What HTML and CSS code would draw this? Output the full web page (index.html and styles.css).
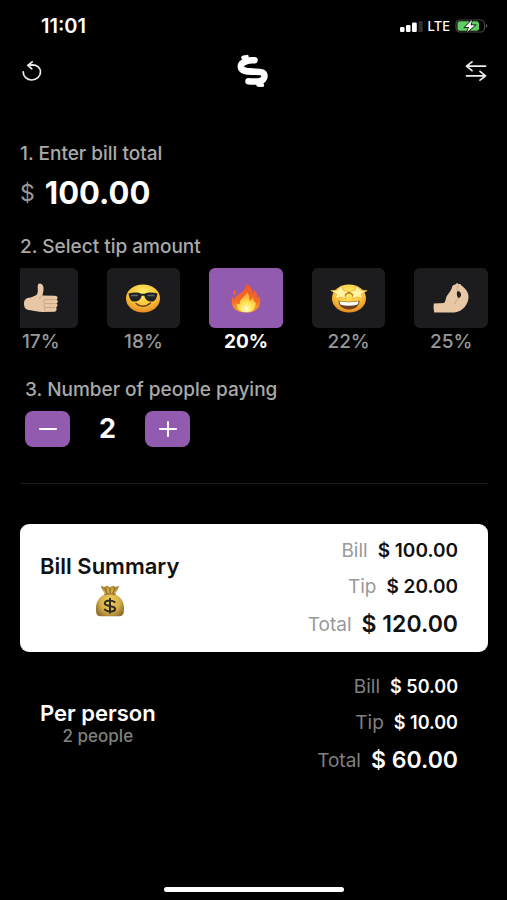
FILE: index.html
```html
<!DOCTYPE html>
<html lang="en">
<head>
<meta charset="utf-8">
<meta name="viewport" content="width=device-width, initial-scale=1">
<title>Tip calculator</title>
<link rel="stylesheet" href="styles.css">
</head>
<body>
<div class="app">
  <div class="status">
    <span class="time">11:01</span>
    <div class="signals">
      <svg width="23" height="11" viewBox="0 0 23 11" aria-hidden="true">
        <g fill="#fff"><rect x="0" y="6" width="4.5" height="5" rx="1.3"/><rect x="6" y="4" width="4.5" height="7" rx="1.3"/><rect x="12" y="1.5" width="4.8" height="9.5" rx="1.3"/></g>
        <rect x="18.5" y="0" width="4.3" height="11" rx="1.2" fill="#303032"/>
      </svg>
      <span>LTE</span>
      <svg width="33" height="14" viewBox="0 0 33 14" aria-hidden="true">
        <rect x="1" y="1" width="28.5" height="12" rx="4" fill="none" stroke="#48484a" stroke-width="1.2"/>
        <path d="M31 4.800q2.600 2.200 0 4.400z" fill="#5a5a5c"/>
        <rect x="2.500" y="2.300" width="21.500" height="9.400" rx="2.500" fill="#5fcb61"/>
        <path d="M17.200.800 10 8h4L12 13.200 20 6.200h-4.400z" fill="#fff" stroke="#000" stroke-width="1.400" paint-order="stroke"/>
      </svg>
    </div>
  </div>

  <header class="bar">
    <button class="icon" type="button" aria-label="Reset">
      <svg width="20" height="22" viewBox="0 0 20 22" fill="none" stroke="#eee" stroke-width="1.7" stroke-linecap="round" stroke-linejoin="round">
        <path d="M1.200 11.800C1 16.500 5 20 9.800 20s8.700-3.400 8.700-7.900c0-4.200-3.400-7.200-8-7.200L5.800 5.300M10.200 1.800 5.800 5.300l4 3.500"/>
      </svg>
    </button>
    <svg class="logo" width="34" height="34" viewBox="0 0 34 34" fill="none" stroke="#fff" stroke-linecap="round" stroke-linejoin="round" aria-hidden="true">
      <path stroke-width="6.500" d="M17.500 6.300C12.500 5.800 3.800 7.500 3.800 12.500c0 5 6.700 5 12 5.200 6 .2 11.700-.6 11.700 4.300 0 3.500-3 5-6.500 5.500-4 .2-8-.2-9.500-.2"/>
      <path stroke-width="5" d="M7.500 4 8.500 7M23.500 30 25 27"/>
      <path stroke-width="3.500" d="M6 3.500 10 2.600M21 31l4.500.2"/>
      <path stroke-width="3" d="M8 15 19 17M13 15.500 25 17.500"/>
    </svg>
    <button class="icon" type="button" aria-label="Swap">
      <svg width="22" height="22" viewBox="0 0 22 22" fill="none" stroke="#eee" stroke-width="1.7" stroke-linecap="round" stroke-linejoin="round">
        <path d="M20.500 6.200H1.500M7 1.800 1.500 6.200 7 10.600M1.500 15.800H20.500M15 11.400l5.500 4.400L15 20.200"/>
      </svg>
    </button>
  </header>

  <main>
    <section class="bill">
      <label class="step" for="bill">1. Enter bill total</label>
      <div class="amount"><span class="currency">$</span><input id="bill" type="text" inputmode="decimal" value="100.00"></div>
    </section>

    <section class="tip">
      <h2 class="step">2. Select tip amount</h2>
      <div class="scroller">
        <div class="tips">
          <button class="option" type="button">
            <span class="tile"><svg width="36" height="32" viewBox="0 0 36 32" aria-hidden="true">
              <path d="M1 21C1.200 16.500 5 15.500 8.500 15.200L13.500 13C16 10 14 5 15 2.500c1-1.800 5-1.300 5.500 3 .3 3-.6 5.700-1.100 8.100l12.500.1c3 .1 3.600 3 1.300 3.900 2.300.7 2.100 3.300.1 4 1.800.8 1.500 3.100-.2 3.800 1 1 .7 4.300-2 4.400l-11.500.2C15 30 11 28.500 7.500 28.200 3 28 .8 26 1 21z" fill="#e7c7a5"/>
              <path d="M19 14c-2 .8-2.500 1.300-2.700 3M32.500 17.600H22c-2 0-2 3.800.3 4h10.200M32 25.500H22.500c-2-.2-2-3.300-.1-3.800M22.500 25.500c-1.500.3-1.600 2.500-.2 3.800" fill="none" stroke="#c39d79" stroke-width=".8"/>
            </svg></span>
            <span class="rate">17%</span>
          </button>
          <button class="option" type="button">
            <span class="tile"><svg width="36" height="32" viewBox="0 0 36 32" aria-hidden="true">
              <defs><radialGradient id="face" cx=".5" cy=".3" r=".7"><stop offset="0" stop-color="#fff06a"/><stop offset=".6" stop-color="#fbc43b"/><stop offset="1" stop-color="#e58a22"/></radialGradient></defs>
              <ellipse cx="18" cy="16.500" rx="17" ry="14" fill="url(#face)"/>
              <path d="M3.500 11.500c5-1.700 10-1.300 13 .2h3c3-1.500 8-1.900 13-.2l-.5 2.200C31 19 28 20 25 19.500c-3.500-.6-5-3-5.700-5.800h-2.600C16 16.500 14.500 18.900 11 19.500 8 20 5 19 4 13.700z" fill="#202225"/>
              <path d="M6 13.500h7M22.500 13.500h7" stroke="#62676b" stroke-width="1.300"/>
              <path d="M11 21.500c3.500 3.600 10 3.700 14.500-.5" fill="none" stroke="#75421d" stroke-width="1.600" stroke-linecap="round"/>
            </svg></span>
            <span class="rate">18%</span>
          </button>
          <button class="option selected" type="button" aria-pressed="true">
            <span class="tile"><svg width="32" height="32" viewBox="0 0 32 32" aria-hidden="true">
              <defs><linearGradient id="flame" x1="0" y1="0" x2="0" y2="1"><stop offset="0" stop-color="#f5542b"/><stop offset=".6" stop-color="#f36b26"/><stop offset="1" stop-color="#f9a82b"/></linearGradient>
              <radialGradient id="core" cx=".5" cy=".85" r=".8"><stop offset="0" stop-color="#fffbd0"/><stop offset=".45" stop-color="#ffe14d"/><stop offset="1" stop-color="#fb9a2b"/></radialGradient></defs>
              <path d="M15.500 1.500C21 4 23 8 22.500 11.500c1.500-.8 1.600-2.400 1.500-3.800C27 10.500 27.500 14 27.500 16c1-.5 1.500-1.500 1.700-2.500C32 20 30.500 30.500 16 30.500S.500 21 2.500 14c.5 1.500 1 2.600 2.200 3.300C4.500 14.500 7.500 13.500 10 11.500 13 9 16.500 6.500 15.500 1.500z" fill="url(#flame)"/>
              <path d="M17 10c2.500 3 2.800 6 2.500 9 1.800-.8 2.600-2 2.700-4 2 2.500 1 5 3.800 5.500C26 26 23 30.300 16 30.300c-6.500 0-9.500-3.800-9.500-8.800 1.500 1 2.500 1 3.500.3C8.800 17 15 16 17 10z" fill="url(#core)"/>
              <path d="M4.500 8c2.200 1.500 1.800 4 .2 5C2.500 11.700 3.300 9.500 4.500 8z" fill="#f2662b"/>
            </svg></span>
            <span class="rate">20%</span>
          </button>
          <button class="option" type="button">
            <span class="tile"><svg width="38" height="32" viewBox="0 0 38 32" aria-hidden="true">
              <ellipse cx="19" cy="16.500" rx="17" ry="14" fill="url(#face)"/>
              <path d="M8.500 18.500c6 1.700 15 1.700 21 0 .5 5-4.500 9-10.500 9s-11-4-10.500-9z" fill="#70401f"/>
              <path d="M9.500 19.200c6 1.500 13 1.500 19 0 .1 1.500-.5 2.600-1.300 3.600-5 1.200-11.400 1.200-16.400 0-.8-1-1.400-2.100-1.300-3.600z" fill="#fff"/>
              <path d="M15 14.500c1-5 7-5 8 0" fill="none" stroke="#9b671d" stroke-width="1.300"/>
              <path d="M11.500 4l1.900 4.500 5.300.9-3.900 3 1.100 4.600-5-2-5.500 1.600 1.400-4.400L.8 8.500l6.400-.3z" fill="#fff3a5" stroke="#eda72d" stroke-width=".7" stroke-linejoin="round"/>
              <path d="M26.500 4l-1.900 4.500-5.300.9 3.900 3-1.100 4.600 5-2 5.500 1.600-1.400-4.400 6-3.700-6.400-.3z" fill="#fff3a5" stroke="#eda72d" stroke-width=".7" stroke-linejoin="round"/>
            </svg></span>
            <span class="rate">22%</span>
          </button>
          <button class="option" type="button">
            <span class="tile"><svg width="36" height="32" viewBox="0 0 36 32" aria-hidden="true">
              <path d="M.8 21.500 11 21c2-1.500 1.500-5.500 3.500-8C17 9.800 18.500 8 19.300 4.500c.4-1.500 1.700-2.200 2.800-1.700C22.800.8 25 .8 25.600 2.200c1.500-.4 2.400.4 2.800 1.400C33 7 36 11 35.500 16c-.5 6-5.500 13.500-14 14.500H1.300C.5 28 .5 24 .8 21.500z" fill="#e7c7a5"/>
              <path d="M24.200 9.500c2-1.500 3.800 1.500 3.900 3.500-.3 2-1.500 2.600-2.500 3.200-1.600-1.200-2.300-4.500-1.400-6.700z" fill="#242022"/>
              <path d="M25.500 3.500c-2 2-1.500 5-1 6M26 16c-2.500 1.500-3.500 4-4.500 6.500" fill="none" stroke="#c39d79" stroke-width=".8"/>
            </svg></span>
            <span class="rate">25%</span>
          </button>
        </div>
      </div>
    </section>

    <section class="people">
      <h2 class="step">3. Number of people paying</h2>
      <div class="stepper">
        <button type="button" aria-label="Fewer people"><svg width="18" height="18" viewBox="0 0 18 18"><path d="M1 9H17" stroke="#fff" stroke-width="2" stroke-linecap="round"/></svg></button>
        <output>2</output>
        <button type="button" aria-label="More people"><svg width="18" height="18" viewBox="0 0 18 18"><path d="M1 9H17M9 2V16" stroke="#fff" stroke-width="2" stroke-linecap="round"/></svg></button>
      </div>
    </section>

    <hr>

    <section class="card light">
      <div class="caption">
        <h3>Bill Summary</h3>
        <svg width="30" height="32" viewBox="0 0 30 32" aria-hidden="true">
          <defs><radialGradient id="bag" cx=".5" cy=".5" r=".6"><stop offset="0" stop-color="#f0d25c"/><stop offset=".6" stop-color="#d3ad48"/><stop offset="1" stop-color="#8f6a2b"/></radialGradient></defs>
          <path d="M6 .8 9 2 12 .8 15 2 18.500.8 21 2 24 .8C23.500 4.500 21 6.500 20.300 9.500 26 12 29 17 29 23c0 6-1 8-4.500 8.300h-19C2 31 .8 29 1 23 1 17 4 12 9.800 9.500 9 6.500 6.300 4.500 6 .8z" fill="url(#bag)"/>
          <path d="M9.500 9.500Q15 8 20.500 9.500M10 3l2 5.500M15 3v5M20 3l-2 5.500" fill="none" stroke="#8a642c" stroke-width="1.200"/>
          <path d="M20 17.800c-1-2.500-9.600-3.500-10.200.6-.5 3.300 10.600 1.900 10.400 5.500-.2 3.700-9.300 3.300-10.700 0M15 13v15.500" fill="none" stroke="#302a24" stroke-width="2"/>
        </svg>
      </div>
      <dl>
        <div><dt>Bill</dt><dd>$ 100.00</dd></div>
        <div><dt>Tip</dt><dd>$ 20.00</dd></div>
        <div class="total"><dt>Total</dt><dd>$ 120.00</dd></div>
      </dl>
    </section>

    <section class="card">
      <div class="caption">
        <h3>Per person</h3>
        <p>2 people</p>
      </div>
      <dl>
        <div><dt>Bill</dt><dd>$ 50.00</dd></div>
        <div><dt>Tip</dt><dd>$ 10.00</dd></div>
        <div class="total"><dt>Total</dt><dd>$ 60.00</dd></div>
      </dl>
    </section>
  </main>

  <div class="home"></div>
</div>
</body>
</html>
```
FILE: styles.css
```css
* { box-sizing: border-box; margin: 0; padding: 0; }
body { background: #000; color: #fff; font-family: Inter, "Liberation Sans", sans-serif; }
button { background: none; border: 0; color: inherit; font: inherit; cursor: pointer; }
svg { display: block; flex: none; }
.app { min-height: 100vh; display: flex; flex-direction: column; padding: 16px 19px 8px 20px; }

.status { display: flex; justify-content: space-between; align-items: center; height: 20px; padding-left: 21px; }
.time { font-size: 20px; font-weight: 600; }
.signals { display: flex; align-items: center; gap: 5px; font-size: 13px; font-weight: 500; }

.bar { display: flex; justify-content: space-between; align-items: center; height: 36px; margin-top: 17px; }
.icon { width: 24px; height: 24px; display: flex; align-items: center; justify-content: center; }

.step { display: block; font-size: 19px; font-weight: 500; line-height: 24px; color: #aaa; }
.bill { margin-top: 53px; }
.amount { display: flex; align-items: center; gap: 10px; height: 36px; margin-top: 9px; }
.currency { font-size: 23px; font-weight: 400; color: #999; }
.amount input { flex: 1; min-width: 0; background: none; border: 0; outline: 0; color: #fff; font: 700 31px/36px Inter, sans-serif; }

.tip { margin-top: 24px; }
.scroller { overflow: hidden; margin-top: 9px; }
.tips { display: grid; grid-template-columns: repeat(5, 1fr); gap: 29px; margin-left: -16px; }
.option { display: block; text-align: center; }
.tile { display: flex; align-items: center; justify-content: center; height: 60px; border-radius: 6px; background: #1c1c1e; }
.rate { display: block; margin-top: 3px; font-size: 19px; font-weight: 500; line-height: 22px; color: #999; }
.selected .tile { background: #935bb0; }
.selected .rate { color: #fff; font-weight: 700; }

.people { margin-top: 25px; padding-left: 5px; }
.stepper { display: flex; align-items: center; margin-top: 9px; }
.stepper button { display: flex; align-items: center; justify-content: center; width: 45px; height: 36px; border-radius: 8px; background: #935bb0; }
.stepper output { width: 75px; text-align: center; font-size: 27px; font-weight: 700; line-height: 36px; }

hr { border: 0; height: 1px; margin: 36px 0 40px; background: #1c1c1e; }

.card { display: flex; justify-content: space-between; align-items: center; height: 128px; padding: 0 30px 0 20px; border-radius: 9px; }
.card + .card { margin-top: 8px; }
.light { background: #fff; color: #111; }
.caption { display: flex; flex-direction: column; align-items: center; }
.caption h3 { font-size: 22px; font-weight: 600; line-height: 24px; }
.caption svg { margin: 7px 0 6px; }
.caption p { font-size: 17px; font-weight: 500; line-height: 22px; color: #808080; }
dl div { display: flex; justify-content: flex-end; align-items: center; gap: 10px; height: 36px; }
dl .total { height: 39px; }
dt { font-size: 19px; color: #808080; }
.light dt { color: #999; }
dd { font-size: 18px; font-weight: 600; }
.light dd { font-size: 19px; }
dl .total dd { font-size: 23px; }

.home { width: 180px; height: 5px; margin: auto auto 0; border-radius: 3px; background: #fff; }
```
